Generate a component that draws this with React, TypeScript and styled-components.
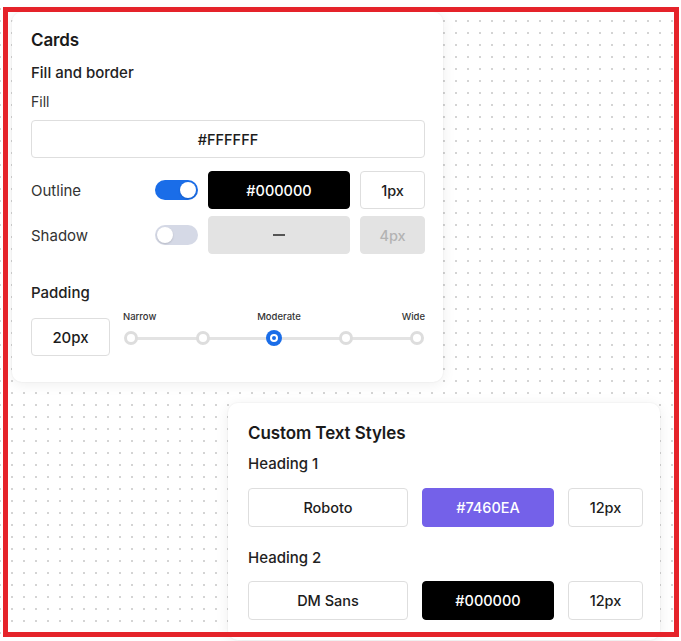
import styled, { createGlobalStyle, css } from "styled-components";

const GlobalStyle = createGlobalStyle`
  html, body {
    margin: 0;
    padding: 0;
  }
  body {
    font-family: Inter, "Liberation Sans", sans-serif;
    color: #1c1c1c;
    background: #fff;
  }
  * {
    box-sizing: border-box;
  }
`;

const BLUE = "#1a6de8";

// canvas with the dotted grid

const Canvas = styled.div`
  position: relative;
  height: 641px;
  overflow: hidden;
  padding: 12px 0 0 12px;
  display: flex;
  flex-direction: column;
  align-items: flex-start;
  gap: 21px;
  background-color: #fff;
  background-image: radial-gradient(circle, #d4d4d4 0.9px, transparent 1.4px);
  background-size: 12px 12px;
  background-position: 6px 3px;
`;

// red selection frame drawn over the canvas
const SelectionFrame = styled.div`
  position: absolute;
  left: 3px;
  top: 7px;
  right: 2px;
  bottom: 4px;
  border: 5px solid #e5232a;
  pointer-events: none;
`;

const Card = styled.section<{ $offset?: number }>`
  width: 431px;
  margin-left: ${({ $offset }) => $offset ?? 0}px;
  background: #fff;
  border-radius: 10px;
  box-shadow: 0 2px 14px rgba(0, 0, 0, 0.07), 0 0 0 1px rgba(0, 0, 0, 0.02);
  display: flex;
  flex-direction: column;
`;

const FirstCard = styled(Card)`
  padding: 17px 18px 26px 19px;
`;

const SecondCard = styled(Card)`
  width: 432px;
  padding: 19px 17px 20px 20px;
`;

const Title = styled.h2`
  margin: 0;
  font-size: 17px;
  line-height: 22px;
  font-weight: 600;
  color: #1a1a1a;
  letter-spacing: -0.1px;
`;

const Subtitle = styled.h3<{ $top: number }>`
  margin: ${({ $top }) => $top}px 0 0;
  font-size: 15px;
  line-height: 20px;
  font-weight: 500;
  color: #222;
`;

const Label = styled.div<{ $top?: number }>`
  margin-top: ${({ $top }) => $top ?? 0}px;
  font-size: 14px;
  line-height: 18px;
  color: #333;
`;

const Field = styled.div<{ $tone?: "light" | "dark" | "purple" | "muted" }>`
  height: 38px;
  display: flex;
  align-items: center;
  justify-content: center;
  border-radius: 4px;
  font-size: 14.5px;
  font-weight: 500;
  border: 1px solid #dedede;
  background: #fff;
  color: #1c1c1c;

  ${({ $tone }) =>
    $tone === "dark" &&
    css`
      background: #000;
      border-color: #000;
      color: #fff;
    `}
  ${({ $tone }) =>
    $tone === "purple" &&
    css`
      background: #7461e9;
      border-color: #7461e9;
      color: #fff;
    `}
  ${({ $tone }) =>
    $tone === "muted" &&
    css`
      background: #e3e3e3;
      border-color: #e3e3e3;
      color: #b3b3b3;
    `}
`;

const Dash = styled.span`
  width: 12px;
  height: 2px;
  background: #555;
`;

const FillField = styled(Field)`
  margin-top: 9px;
`;

const ToggleRow = styled.div<{ $top: number }>`
  margin-top: ${({ $top }) => $top}px;
  display: grid;
  grid-template-columns: 1fr 43px 142px 65px;
  column-gap: 10px;
  align-items: center;
`;

const RowLabel = styled.span`
  font-size: 15px;
  color: #333;
`;

const Switch = styled.div<{ $on: boolean }>`
  position: relative;
  width: 43px;
  height: 20px;
  border-radius: 10px;
  background: ${({ $on }) => ($on ? BLUE : "#d5d9e6")};

  &::after {
    content: "";
    position: absolute;
    top: 2px;
    left: ${({ $on }) => ($on ? "25px" : "2px")};
    width: 16px;
    height: 16px;
    border-radius: 50%;
    background: #fff;
    box-shadow: 0 1px 2px rgba(0, 0, 0, 0.15);
  }
`;

const PaddingRow = styled.div`
  margin-top: 8px;
  display: flex;
  align-items: flex-start;
  gap: 13px;
`;

const SizeBox = styled(Field)`
  width: 79px;
  margin-top: 7px;
  font-size: 15px;
`;

const Slider = styled.div`
  flex: 1;
  display: flex;
  flex-direction: column;
  gap: 8px;
`;

const SliderLabels = styled.div`
  display: flex;
  justify-content: space-between;
  font-size: 9.5px;
  line-height: 12px;
  font-weight: 500;
  color: #333;
`;

const Track = styled.div`
  position: relative;
  height: 14px;
  margin-right: 1px;
  margin-left: 1px;
  display: flex;
  justify-content: space-between;
  align-items: center;

  &::before {
    content: "";
    position: absolute;
    left: 7px;
    right: 7px;
    top: 6px;
    height: 3px;
    background: #e3e3e3;
  }
`;

const Stop = styled.span<{ $active?: boolean }>`
  position: relative;
  width: 14px;
  height: 14px;
  border-radius: 50%;
  background: #fff;
  border: 3px solid #dddddd;

  ${({ $active }) =>
    $active &&
    css`
      width: 16px;
      height: 16px;
      margin: -1px;
      border: none;
      background: ${BLUE};

      &::after {
        content: "";
        position: absolute;
        left: 4px;
        top: 4px;
        width: 8px;
        height: 8px;
        border-radius: 50%;
        border: 2px solid #fff;
        box-sizing: border-box;
      }
    `}
`;

const StyleRow = styled.div<{ $top: number }>`
  margin-top: ${({ $top }) => $top}px;
  display: grid;
  grid-template-columns: 160px 132px 1fr;
  column-gap: 14px;

  ${Field} {
    height: 39px;
    font-size: 14.5px;
  }
`;

const stops = [0, 1, 2, 3, 4];

export default function App() {
  return (
    <>
      <GlobalStyle />
      <Canvas>
        <FirstCard>
          <Title>Cards</Title>
          <Subtitle $top={12}>Fill and border</Subtitle>
          <Label $top={10}>Fill</Label>
          <FillField>#FFFFFF</FillField>

          <ToggleRow $top={13}>
            <RowLabel>Outline</RowLabel>
            <Switch $on />
            <Field $tone="dark">#000000</Field>
            <Field>1px</Field>
          </ToggleRow>
          <ToggleRow $top={7}>
            <RowLabel>Shadow</RowLabel>
            <Switch $on={false} />
            <Field $tone="muted">
              <Dash />
            </Field>
            <Field $tone="muted">4px</Field>
          </ToggleRow>

          <Subtitle $top={29}>Padding</Subtitle>
          <PaddingRow>
            <SizeBox>20px</SizeBox>
            <Slider>
              <SliderLabels>
                <span>Narrow</span>
                <span>Moderate</span>
                <span>Wide</span>
              </SliderLabels>
              <Track>
                {stops.map((s) => (
                  <Stop key={s} $active={s === 2} />
                ))}
              </Track>
            </Slider>
          </PaddingRow>
        </FirstCard>

        <SecondCard $offset={216}>
          <Title>Custom Text Styles</Title>
          <Subtitle $top={10}>Heading 1</Subtitle>
          <StyleRow $top={14}>
            <Field>Roboto</Field>
            <Field $tone="purple">#7460EA</Field>
            <Field>12px</Field>
          </StyleRow>
          <Subtitle $top={21}>Heading 2</Subtitle>
          <StyleRow $top={13}>
            <Field>DM Sans</Field>
            <Field $tone="dark">#000000</Field>
            <Field>12px</Field>
          </StyleRow>
        </SecondCard>

        <SelectionFrame />
      </Canvas>
    </>
  );
}
